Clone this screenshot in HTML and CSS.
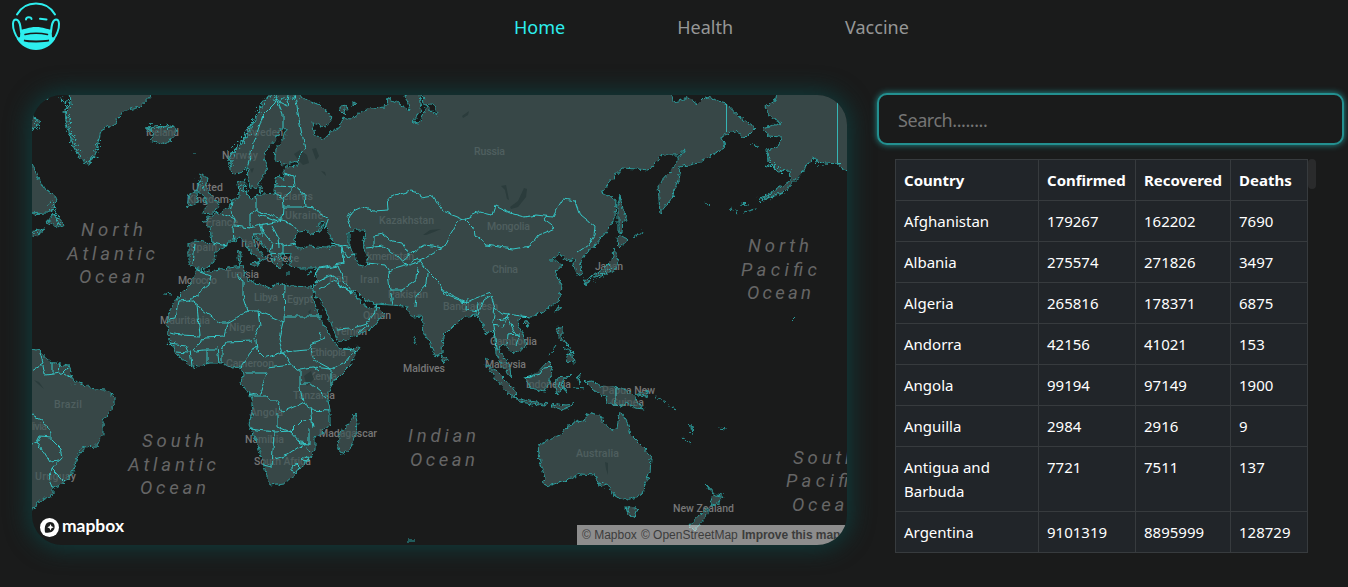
FILE: index.html
```html
<!DOCTYPE html>
<html lang="en">
<head>
<meta charset="utf-8">
<title>Covid Tracker</title>
<link rel="stylesheet" href="styles.css">
</head>
<body>
<header class="header">
  <svg class="logo" viewBox="0 0 50 50" width="50" height="50" fill="none" stroke="#2deeee" stroke-width="2" stroke-linecap="round">
    <path d="M6 13.500C10 6.500 17 2.500 25 2.500S40 6.500 44 13.500"/>
    <path d="M15 18.500C15 15.500 20.500 15.500 20.500 18M29 17.800l6.500.6"/>
    <path d="M10 31C9.500 25 9 19 5 18.500C1 18.500 1.500 26 3.500 31C4.500 34 5.500 36 7.500 38M40 31C40.500 25 41 19 45 18.500C49 18.500 48.500 26 46.500 31C45.500 34 44.500 36 42.500 38"/>
    <path fill="#2deeee" stroke="none" d="M9.500 28.500C15 28.500 17 26 25 26S35 28.500 40.500 28.500L41 36 44.500 37.500C40 45 33 49 25 49S10 45 5.500 37.500L9 36z"/>
    <path stroke="#1a1b1b" stroke-width="1.500" d="M14 33.500C20 32 30 32 36.500 33.500M13 39.500C20 40.300 30 40.300 38 39.500C33 41 17 41 13 39.500z"/>
  </svg>
  <nav class="nav">
    <a class="nav-link active">Home</a>
    <a class="nav-link">Health</a>
    <a class="nav-link">Vaccine</a>
  </nav>
</header>
<main class="main">
  <section class="map">
    <svg class="map-canvas" viewBox="32 95 815 450" width="815" height="450">
      <defs>
        <filter id="coast" filterUnits="userSpaceOnUse" x="22" y="85" width="835" height="470" color-interpolation-filters="sRGB">
          <feTurbulence type="fractalNoise" baseFrequency="0.22" numOctaves="3" seed="4" result="n"/>
          <feDisplacementMap in="SourceGraphic" in2="n" scale="6" xChannelSelector="R" yChannelSelector="G"/>
        </filter>
        <filter id="frontier" filterUnits="userSpaceOnUse" x="22" y="85" width="835" height="470" color-interpolation-filters="sRGB">
          <feTurbulence type="fractalNoise" baseFrequency="0.14" numOctaves="2" seed="9" result="n"/>
          <feDisplacementMap in="SourceGraphic" in2="n" scale="5" xChannelSelector="R" yChannelSelector="G"/>
        </filter>
        <filter id="fjord" filterUnits="userSpaceOnUse" x="22" y="85" width="835" height="470" color-interpolation-filters="sRGB">
          <feTurbulence type="fractalNoise" baseFrequency="0.32" numOctaves="3" seed="2" result="n"/>
          <feDisplacementMap in="SourceGraphic" in2="n" scale="15" xChannelSelector="R" yChannelSelector="G"/>
        </filter>
      </defs>
      <g class="sea-labels">
        <text x="81" y="236" textLength="62">North</text><text x="67" y="260" textLength="88">Atlantic</text><text x="79" y="283" textLength="66">Ocean</text>
        <text x="748" y="252" textLength="61">North</text><text x="741" y="276" textLength="76">Pacific</text><text x="747" y="299" textLength="64">Ocean</text>
        <text x="142" y="447" textLength="62">South</text><text x="128" y="471" textLength="88">Atlantic</text><text x="140" y="494" textLength="66">Ocean</text>
        <text x="408" y="442" textLength="68">Indian</text><text x="410" y="466" textLength="65">Ocean</text>
        <text x="793" y="464" textLength="62">South</text><text x="786" y="487" textLength="76">Pacific</text><text x="792" y="511" textLength="66">Ocean</text>
      </g>
      <g class="labels">
        <text x="146" y="136" textLength="33">Iceland</text><text x="222" y="159" textLength="36">Norway</text><text x="246" y="136" textLength="37">Sweden</text>
        <text x="192" y="191" textLength="31">United</text><text x="187" y="203" textLength="42">Kingdom</text><text x="206" y="226" textLength="32">France</text>
        <text x="190" y="251" textLength="27">Spain</text><text x="178" y="284" textLength="39">Morocco</text><text x="225" y="278" textLength="34">Tunisia</text>
        <text x="241" y="247" textLength="20">Italy</text><text x="266" y="262" textLength="33">Greece</text><text x="276" y="200" textLength="37">Belarus</text>
        <text x="285" y="219" textLength="38">Ukraine</text><text x="474" y="155" textLength="31">Russia</text><text x="379" y="224" textLength="55">Kazakhstan</text>
        <text x="487" y="230" textLength="43">Mongolia</text><text x="492" y="273" textLength="26">China</text><text x="352" y="260" textLength="62">Turkmenistan</text>
        <text x="329" y="282" textLength="19">Iraq</text><text x="360" y="283" textLength="19">Iran</text><text x="388" y="298" textLength="40">Pakistan</text><text x="443" y="310" textLength="55">Bangladesh</text>
        <text x="363" y="319" textLength="28">Oman</text><text x="335" y="335" textLength="32">Yemen</text><text x="254" y="301" textLength="24">Libya</text><text x="287" y="303" textLength="26">Egypt</text>
        <text x="160" y="324" textLength="50">Mauritania</text><text x="229" y="331" textLength="26">Niger</text><text x="310" y="356" textLength="36">Ethiopia</text><text x="226" y="367" textLength="48">Cameroon</text>
        <text x="309" y="380" textLength="28">Kenya</text><text x="293" y="399" textLength="42">Tanzania</text><text x="250" y="416" textLength="33">Angola</text><text x="245" y="443" textLength="39">Namibia</text>
        <text x="254" y="465" textLength="57">South Africa</text><text x="319" y="437" textLength="58">Madagascar</text><text x="403" y="372" textLength="42">Maldives</text>
        <text x="490" y="345" textLength="47">Cambodia</text><text x="485" y="368" textLength="41">Malaysia</text><text x="526" y="388" textLength="45">Indonesia</text>
        <text x="602" y="394" textLength="53">Papua New</text><text x="611" y="406" textLength="33">Guinea</text><text x="576" y="457" textLength="43">Australia</text><text x="595" y="270" textLength="28">Japan</text>
        <text x="673" y="512" textLength="61">New Zealand</text><text x="54" y="408" textLength="28">Brazil</text><text x="19" y="430" textLength="28">Bolivia</text><text x="35" y="480" textLength="41">Uruguay</text>
      </g>
      <g class="land" filter="url(#coast)">
        <path d="M272 92L262 103 258 113 250 130 240 145 230 155 230 170 235 175 242 172 247 167 248 178 250 188 257 188 262 178 267 168 264 157 267 150 275 140 280 129 286 130 284 138 276 148 275 160 283 165 297 161 298 166 285 167 283 173 285 179 277 176 274 190 275 193 262 194 250 198 244 192 245 180 238 182 239 197 232 200 228 208 222 212 210 216 202 222 210 228 212 243 195 241 189 244 189 265 197 268 205 269 214 262 215 253 225 246 232 241 240 238 244 241 251 252 260 260 258 264 266 258 256 247 252 235 256 237 264 247 271 253 274 263 280 269 283 262 280 254 291 253 290 264 297 268 317 268 315 285 312 288 314 293 312 287 290 286 278 283 270 288 260 284 247 280 245 275 243 266 215 270 204 272 197 269 190 285 178 297 170 310 167 325 169 340 177 355 193 367 210 363 222 363 232 368 241 367 243 375 241 383 250 395 253 408 249 425 256 440 262 460 270 485 285 483 297 473 307 460 315 450 315 438 330 425 330 410 327 395 335 380 350 365 360 347 340 349 333 340 322 322 312 297 314 292 320 300 330 320 338 343 360 334 375 326 384 313 376 305 370 309 362 303 352 291 355 290 365 300 376 304 405 306 413 317 422 316 424 332 436 357 442 352 443 336 457 322 467 316 477 315 483 325 486 334 492 331 495 340 496 354 501 365 511 377 510 368 505 359 499 352 502 343 508 348 513 354 526 347 523 333 518 325 520 316 531 317 548 309 560 298 561 285 555 272 563 265 556 260 550 260 560 253 567 262 573 258 576 275 583 273 580 262 587 252 595 245 608 230 615 218 616 200 606 195 601 192 622 168 650 170 662 155 678 155 685 149 670 172 658 185 660 213 672 198 678 180 680 167 698 163 720 150 725 148 722 137 733 130 745 138 755 128 740 117 725 103 705 97 698 104 690 98 673 102 670 92H423L424 105 432 104 438 115 432 112 427 106 419 123 412 122 419 114 421 103 420 92H404L410 110 400 104 388 98 386 107 370 108 360 112 350 120 343 117 340 127 330 132 325 140 315 135 312 123 325 127 332 118 322 106 302 98 298 92z"/>
        <path d="M70 92L71 105 64 112 68 128 73 146 80 159 89 165 95 155 101 131 115 123 122 112 140 107 154 92z"/>
        <path d="M146 128L155 126 162 127 172 125 177 133 170 141 160 144 150 140 154 134z"/>
        <path d="M28 160L36 173 43 187 56 197 55 208 47 213 28 214zM47 222L53 214 64 224 62 228zM28 231L45 228 36 236 28 238zM28 113L40 122 28 136z"/>
        <path d="M197 190L201 175 208 178 206 187 211 195 219 205 214 213 201 214 207 206 203 195zM187 207L189 194 197 190 198 203z"/>
        <path d="M28 348L40 351 50 362 68 366 73 380 90 388 105 390 115 397 115 405 103 420 103 435 97 446 85 447 77 457 74 470 63 484 53 488 53 495 37 503 36 508 28 510z"/>
        <path d="M777 92L775 101 765 107 770 117 782 123 762 128 768 136 781 137 780 145 767 150 768 161 778 171 790 170 791 180 776 190 760 200 783 193 803 172 812 158 825 163 838 164 851 174V92z"/>
        <path d="M538 445L550 439 560 435 567 427 578 420 585 422 587 413 603 417 602 423 613 431 617 428 620 411 627 422 631 435 645 449 651 458 650 472 641 495 627 500 614 496 608 484 600 486 595 475 580 474 568 480 550 486 542 483 545 478 540 462zM626 507L637 508 634 517 629 516z"/>
        <path d="M706 484L716 495 723 496 717 505 710 504 713 495zM708 507L708 514 695 530 688 527 700 514z"/>
        <path d="M355 414L358 425 350 450 341 454 338 445 340 432 349 425z"/>
        <path d="M486 365L495 369 506 380 515 391 516 398 508 393 497 380zM515 398L530 401 548 404 545 406 520 402zM550 405L558 404 566 405 574 404 564 410 552 407zM525 378L535 375 548 361 553 366 550 380 545 391 530 388z"/>
        <path d="M557 378L571 376 561 382 567 392 561 387 558 395 556 387zM577 375L580 373 579 384zM574 388L585 389M585 382L592 381 600 386 615 387 630 392 637 400 644 409 635 408 626 402 618 407 607 402 605 396 593 390zM636 395L648 391 647 396zM655 396L665 402M668 404L676 410M688 423L694 430M682 438L690 444"/>
        <path d="M557 328L562 326 562 337 568 345 560 340zM566 354L573 355 574 363 566 361zM556 345L549 355M564 347L570 352M556 313L559 305 561 309zM523 323L529 320 527 327zM441 353L447 358 444 363z"/>
        <path d="M617 244L619 234 628 240 620 247zM615 248L618 262 613 272 602 275 590 277 604 268 612 260zM584 279L590 280 586 286zM620 195L623 210 627 220 623 220 622 232 618 231 618 205zM632 238L643 232"/>
        <path d="M239 250L241 254 240 266 238 258zM250 263L258 262 256 267zM259 187L264 188 261 192zM353 101L356 103 353 106zM340 107L347 106 344 115 340 111zM750 143L758 146M766 165L772 167M737 213L729 207M744 212L756 209M741 204L748 205M705 202L709 205M795 317L791 321M34 549L42 555M41 100L47 97 46 101M414 336L416 345M485 358L488 360M406 541L415 541M691 427L692 434M285 273L290 273M306 274L312 272M163 294L173 295M193 153L196 153M718 428L727 429"/>
      </g>
      <g class="fjords" filter="url(#fjord)">
        <path d="M69 97L66 112 70 130 75 147 82 159 89 163 95 153 100 136M62 97L63 103M265 99L257 113 250 128 241 143 231 154 231 168M268 97L280 99 298 98M148 128L158 128 172 127M197 178L204 190M34 116L37 128M50 200L55 212 60 224M33 232L42 231M241 186L248 190M278 256L288 262M588 281L600 276 612 268M568 346L572 354M558 382L562 390M814 162L822 163M760 200L784 192M770 160L780 171M72 382L77 384M605 487L607 482M270 252L276 262M169 341L174 346"/>
      </g>
      <g class="water" filter="url(#coast)">
        <path d="M296 246L294 240 299 231 307 230 310 235 321 230 323 225 316 226 323 220 331 237 335 246 325 248 310 246 300 248zM349 233L356 230 366 230 363 240 365 249 368 260 366 267 357 264 355 255 349 244z"/>
      </g>
      <g class="lakes"><path d="M294 154l6-4 7 5 2 8-6 2-4-4zM312 149l4-1 3 8-3 4zM321 171l4 1 1 4zM510 207l8-6 6-13 3 1-1 8-8 10-7 2zM462 116l7-5-1 4-5 3zM501 186l5-1 3 15-2-1-2-9zM423 235l7-5 11-1-7 3-8 3zM250 169l4-1-2 5zM304 376l7-5 3 8-7 7zM605 462l3 1 0 12-2-6zM308 312l3-3-1 5zM34 380l5 2 5 7-6-5z"/></g>
      <g class="borders" filter="url(#frontier)">
        <path d="M278 94L275 103 263 115 258 130 253 142 250 158 247 168M277 101L283 115 283 128M277 101L287 106 289 94M295 95L298 113 301 130 305 148 296 162M283 173L294 176 295 187 305 195 306 207 315 208 320 214 329 217 325 228M275 186L295 187M282 198L275 193M282 198L283 207 306 207M282 198L295 187M256 195L256 210 282 220 283 207M232 202L230 211 235 218 235 224 233 228 234 240M222 213L235 219M235 226L250 228 250 214 256 210M250 228L260 225 283 220 292 224 298 231M260 225L265 233 272 242 283 246 295 243M265 233L254 233M272 242L270 253 282 254M283 246L283 254M272 226L278 237 279 248M258 214L270 219 278 222M262 225L262 238M213 243L226 246M195 244L193 264M320 268L344 263 342 247 335 245M330 243L352 248M342 249L348 258 356 254M344 264L341 247"/>
        <path d="M352 230L348 218 351 212 362 207 373 211 389 210 388 198 411 191 418 193 420 198 433 196 443 211 454 215 464 219 480 212 492 215 495 206 510 213 524 217 536 215 553 217 558 207 563 199 575 201 580 215 595 227 594 236 588 245 578 252M464 219L473 228 474 235 486 245 513 249 530 246 538 235 555 228 544 220 548 215M464 219L458 221 450 235 444 248 424 245 414 251 402 262 409 265 418 262 443 248M374 249V236L383 234 392 241 402 243 410 256M366 248L384 246 398 256 406 265M367 263L385 265 390 273M388 271L405 266 418 258 429 272 438 281 442 290 455 297 467 302 476 298 490 293 495 307 502 313 514 315 528 317M388 271L390 290 393 304M390 290L402 290 417 280 418 266M427 273L426 285 416 296 415 307M442 290L445 295 465 302M467 298L466 310 477 312 478 302M478 315L484 300 490 296M495 307L493 322 496 338 497 350M497 320L508 318 514 331 519 337 515 345M507 345L508 335 519 334M493 325L503 327 509 313"/>
        <path d="M314 276L319 269 338 266 343 279 351 292M316 283L329 276 335 275 338 285 352 293M319 290L333 281 351 293M337 330L350 329 366 324 374 314 377 304M358 333L369 324"/>
        <path d="M197 270L211 275 209 285 190 300 178 301 175 319 168 320M190 300L220 323 227 323 248 311 243 296 243 282 238 275M197 306L200 336 181 335 169 333M227 323L224 336 205 337 194 350M258 311L284 322 285 285M285 316H321M248 311L258 311 260 325 253 341 226 342 222 351 222 363M283 322L279 339 283 352 265 358 257 350 256 340M283 352L308 350 312 343 325 338M169 343L185 345 188 352 203 350 216 350M207 350V364M217 347L219 363M190 350L192 366M177 352L188 353M241 366L249 355 256 345M246 373H267L260 393 249 396M267 368L291 365 283 352M291 365L300 370 300 388 303 402 296 406 282 412 278 401 270 401 266 396 250 396M300 383H310L327 397M300 369L313 367 331 369 331 385M313 367L318 371M310 348L314 360 331 369 345 362 355 350 343 349M319 339L321 332M303 402L310 408 313 427M310 410L330 411M277 413V427L290 432 302 420 313 419M249 429L275 432 290 431M274 432L272 467 263 465M275 459L288 455 304 444 309 451M290 432L300 443 309 444 309 428M291 467l5-3 3 3-4 5-4-2zM302 459l4-3 2 4-4 2z"/>
        <path d="M32 370L43 363 40 353M43 365L45 375 62 373 67 368M52 363L52 374M60 364L59 373M64 373L72 378M32 415L43 420 51 433 51 440 60 449 62 458 52 469 64 481M32 444L37 442 49 461 59 460M37 442L40 436 50 437M52 469L49 480 52 487M526 378L539 374 543 368 552 367M616 387V405"/>
      </g>
      <path class="line" d="M726.500 104V132M837.500 100V163.500H841"/>
      <g class="mapbox">
        <circle cx="49.500" cy="527.500" r="9.500" fill="#fff"/>
        <path d="M45 532.500C44 526 46 522 50 522S55 525 54.500 528S51 533.500 45 532.500z" fill="#1b1d1d"/>
        <path d="M50.500 524l1 2.200 2.200 1-2.200 1-1 2.200-1-2.200-2.200-1 2.200-1z" fill="#fff"/>
        <text x="62" y="532" textLength="62" lengthAdjust="spacingAndGlyphs">mapbox</text>
      </g>
    </svg>
    <div class="attribution"><span>© Mapbox</span><span>© OpenStreetMap</span><b>Improve this map</b></div>
  </section>
  <aside class="side">
    <input class="search" type="text" placeholder="Search........">
    <div class="table-wrap">
      <table class="table">
        <colgroup><col class="c1"><col class="c2"><col class="c3"><col class="c4"></colgroup>
        <tr><th>Country</th><th>Confirmed</th><th>Recovered</th><th>Deaths</th></tr>
        <tr><td>Afghanistan</td><td>179267</td><td>162202</td><td>7690</td></tr>
        <tr><td>Albania</td><td>275574</td><td>271826</td><td>3497</td></tr>
        <tr><td>Algeria</td><td>265816</td><td>178371</td><td>6875</td></tr>
        <tr><td>Andorra</td><td>42156</td><td>41021</td><td>153</td></tr>
        <tr><td>Angola</td><td>99194</td><td>97149</td><td>1900</td></tr>
        <tr><td>Anguilla</td><td>2984</td><td>2916</td><td>9</td></tr>
        <tr><td>Antigua and Barbuda</td><td>7721</td><td>7511</td><td>137</td></tr>
        <tr><td>Argentina</td><td>9101319</td><td>8895999</td><td>128729</td></tr>
      </table>
      <span class="thumb"></span>
    </div>
  </aside>
</main>
</body>
</html>
```
FILE: styles.css
```css
* { box-sizing: border-box; }
body {
  margin: 0;
  height: 587px;
  overflow: hidden;
  background: #1a1b1b;
  color: #fff;
  font-family: "Noto Sans", "Open Sans", sans-serif;
}
.header { display: flex; height: 95px; padding: 1px 0 0 11px; }
.logo { flex: none; }
.nav { display: flex; gap: 112px; margin-left: 453px; padding-top: 13px; }
.nav-link { font-size: 18px; line-height: 27px; color: #969797; }
.nav-link.active { color: #2deeee; }
.main { display: flex; padding-left: 32px; }
.map {
  position: relative;
  flex: none;
  width: 815px;
  height: 450px;
  border-radius: 30px;
  overflow: hidden;
  background: #1a1b1b;
  box-shadow: 0 0 22px 4px #103a3a;
}
.map-canvas { display: block; }
.land { fill: rgba(65, 87, 87, .75); stroke: #2b9c9c; stroke-width: 1; }
.fjords { fill: none; stroke: #2fa9a9; stroke-width: 1.3; }
.water { fill: #1a1b1b; stroke: #2b9c9c; stroke-width: 1; }
.lakes { fill: #2b3c3c; }
.borders { fill: none; stroke: #35cdcd; stroke-width: .95; }
.line { fill: none; stroke: #35b5b5; stroke-width: 1; }
.labels { font: 500 10.5px Roboto, sans-serif; fill: #777; }
.sea-labels { font: italic 400 18.5px Roboto, sans-serif; fill: #666; }
.mapbox text { font: 700 17px Lato, sans-serif; fill: #fff; }
.attribution {
  position: absolute;
  right: 0;
  bottom: 0;
  width: 270px;
  height: 20px;
  padding-left: 5px;
  background: rgba(255, 255, 255, .5);
  color: #3c3c3c;
  font: 12px/20px "Liberation Sans", sans-serif;
  white-space: nowrap;
  display: flex;
  gap: 4px;
}
.attribution b { letter-spacing: -.05px; }
.side { margin: -2px 0 0 30px; width: 467px; }
.search {
  display: block;
  width: 467px;
  height: 52px;
  padding: 2px 19px 0;
  border: 2px solid #239090;
  border-radius: 10px;
  background: #1a1b1b;
  box-shadow: 0 0 6px #239090;
  font: 18px "Noto Sans", sans-serif;
  letter-spacing: -.45px;
}
.search::placeholder { color: #757575; opacity: 1; }
.table-wrap { display: flex; margin: 14px 0 0 18px; }
.table {
  width: 413px;
  table-layout: fixed;
  border-collapse: collapse;
  background: #212529;
  font-size: 15px;
  line-height: 24px;
}
.c1 { width: 143px; }
.c2 { width: 97px; }
.c3 { width: 95px; }
.c4 { width: 77px; }
.table th, .table td { padding: 8px; border: 1px solid #373b3e; text-align: left; vertical-align: top; white-space: nowrap; }
.table td:first-child { white-space: normal; }
.table th { font-weight: 700; letter-spacing: 0; }
.thumb { width: 8px; height: 30px; border-radius: 4px; background: #2a2b2c; }
```
